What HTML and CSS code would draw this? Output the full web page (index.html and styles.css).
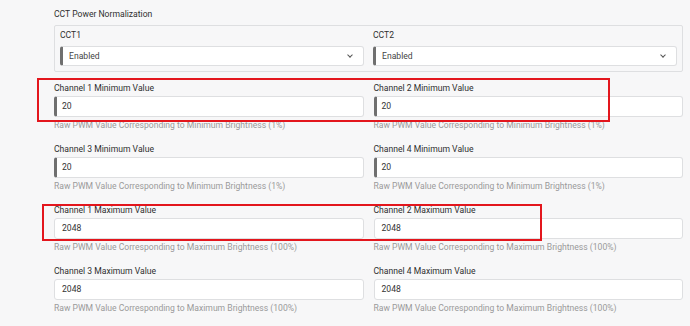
FILE: index.html
```html
<!DOCTYPE html>
<html lang="en">
<head>
    <meta charset="UTF-8">
    <meta name="viewport" content="width=device-width, initial-scale=1.0">
    <title>CCT Power Normalization</title>
    <link rel="stylesheet" href="styles.css">
</head>
<body>
    <div class="page">
        <div class="section-title">CCT Power Normalization</div>
        <div class="fieldset">
            <div class="cell">
                <label class="label">CCT1</label>
                <div class="select">Enabled<span class="chevron"></span></div>
            </div>
            <div class="cell">
                <label class="label">CCT2</label>
                <div class="select">Enabled<span class="chevron"></span></div>
            </div>
        </div>

        <div class="grid">
            <div class="field">
                <label class="label">Channel 1 Minimum Value</label>
                <div class="input accent">20</div>
                <div class="help">Raw PWM Value Corresponding to Minimum Brightness (1%)</div>
            </div>
            <div class="field">
                <label class="label">Channel 2 Minimum Value</label>
                <div class="input accent">20</div>
                <div class="help">Raw PWM Value Corresponding to Minimum Brightness (1%)</div>
            </div>
            <div class="field">
                <label class="label">Channel 3 Minimum Value</label>
                <div class="input accent">20</div>
                <div class="help">Raw PWM Value Corresponding to Minimum Brightness (1%)</div>
            </div>
            <div class="field">
                <label class="label">Channel 4 Minimum Value</label>
                <div class="input accent">20</div>
                <div class="help">Raw PWM Value Corresponding to Minimum Brightness (1%)</div>
            </div>
            <div class="field">
                <label class="label">Channel 1 Maximum Value</label>
                <div class="input">2048</div>
                <div class="help">Raw PWM Value Corresponding to Maximum Brightness (100%)</div>
            </div>
            <div class="field">
                <label class="label">Channel 2 Maximum Value</label>
                <div class="input">2048</div>
                <div class="help">Raw PWM Value Corresponding to Maximum Brightness (100%)</div>
            </div>
            <div class="field">
                <label class="label">Channel 3 Maximum Value</label>
                <div class="input">2048</div>
                <div class="help">Raw PWM Value Corresponding to Maximum Brightness (100%)</div>
            </div>
            <div class="field">
                <label class="label">Channel 4 Maximum Value</label>
                <div class="input">2048</div>
                <div class="help">Raw PWM Value Corresponding to Maximum Brightness (100%)</div>
            </div>
        </div>

        <div class="mark mark-min"></div>
        <div class="mark mark-max"></div>
    </div>
</body>
</html>
```

FILE: styles.css
```css
body {
    margin: 0;
    background-color: #f7f7f8;
    font-family: Roboto, "Liberation Sans", sans-serif;
    font-size: 8.6px;
    color: #2f2f2f;
}
.page {
    position: relative;
    width: 629px;
    padding: 8px 0 0 54px;
}
.section-title {
    line-height: 12px;
    margin-bottom: 5px;
}
.fieldset {
    display: grid;
    grid-template-columns: 1fr 1fr;
    column-gap: 9px;
    border: 1px solid #dedfe1;
    border-radius: 2px;
    padding: 3px 5px 5px 5px;
    margin-bottom: 10px;
}
.label {
    display: block;
    line-height: 12px;
    margin-bottom: 5px;
}
.select {
    position: relative;
    height: 20px;
    box-sizing: border-box;
    line-height: 18px;
    padding-left: 6px;
    background: #fff;
    border: 1px solid #dedfe1;
    border-left: 3px solid #6f6f6f;
    border-radius: 3px;
    color: #444;
}
.chevron {
    position: absolute;
    right: 11px;
    top: 6px;
    width: 3px;
    height: 3px;
    border-right: 1.5px solid #555;
    border-bottom: 1.5px solid #555;
    transform: rotate(45deg);
}
.grid {
    display: grid;
    grid-template-columns: 1fr 1fr;
    column-gap: 10px;
}
.field {
    margin-bottom: 12px;
}
.field .label {
    margin-bottom: 2px;
}
.input {
    height: 21px;
    box-sizing: border-box;
    line-height: 19px;
    padding-left: 7px;
    background: #fff;
    border: 1px solid #dedfe1;
    border-radius: 3px;
    color: #333;
}
.input.accent {
    border-left: 3px solid #6f6f6f;
    padding-left: 5px;
}
.help {
    margin-top: 2px;
    line-height: 12px;
    color: #9a9a9a;
}
.mark {
    position: absolute;
    border: 2px solid #e3161d;
}
.mark-min {
    left: 37px;
    top: 78px;
    width: 569px;
    height: 40px;
}
.mark-max {
    left: 42px;
    top: 204px;
    width: 496px;
    height: 33px;
}
```
